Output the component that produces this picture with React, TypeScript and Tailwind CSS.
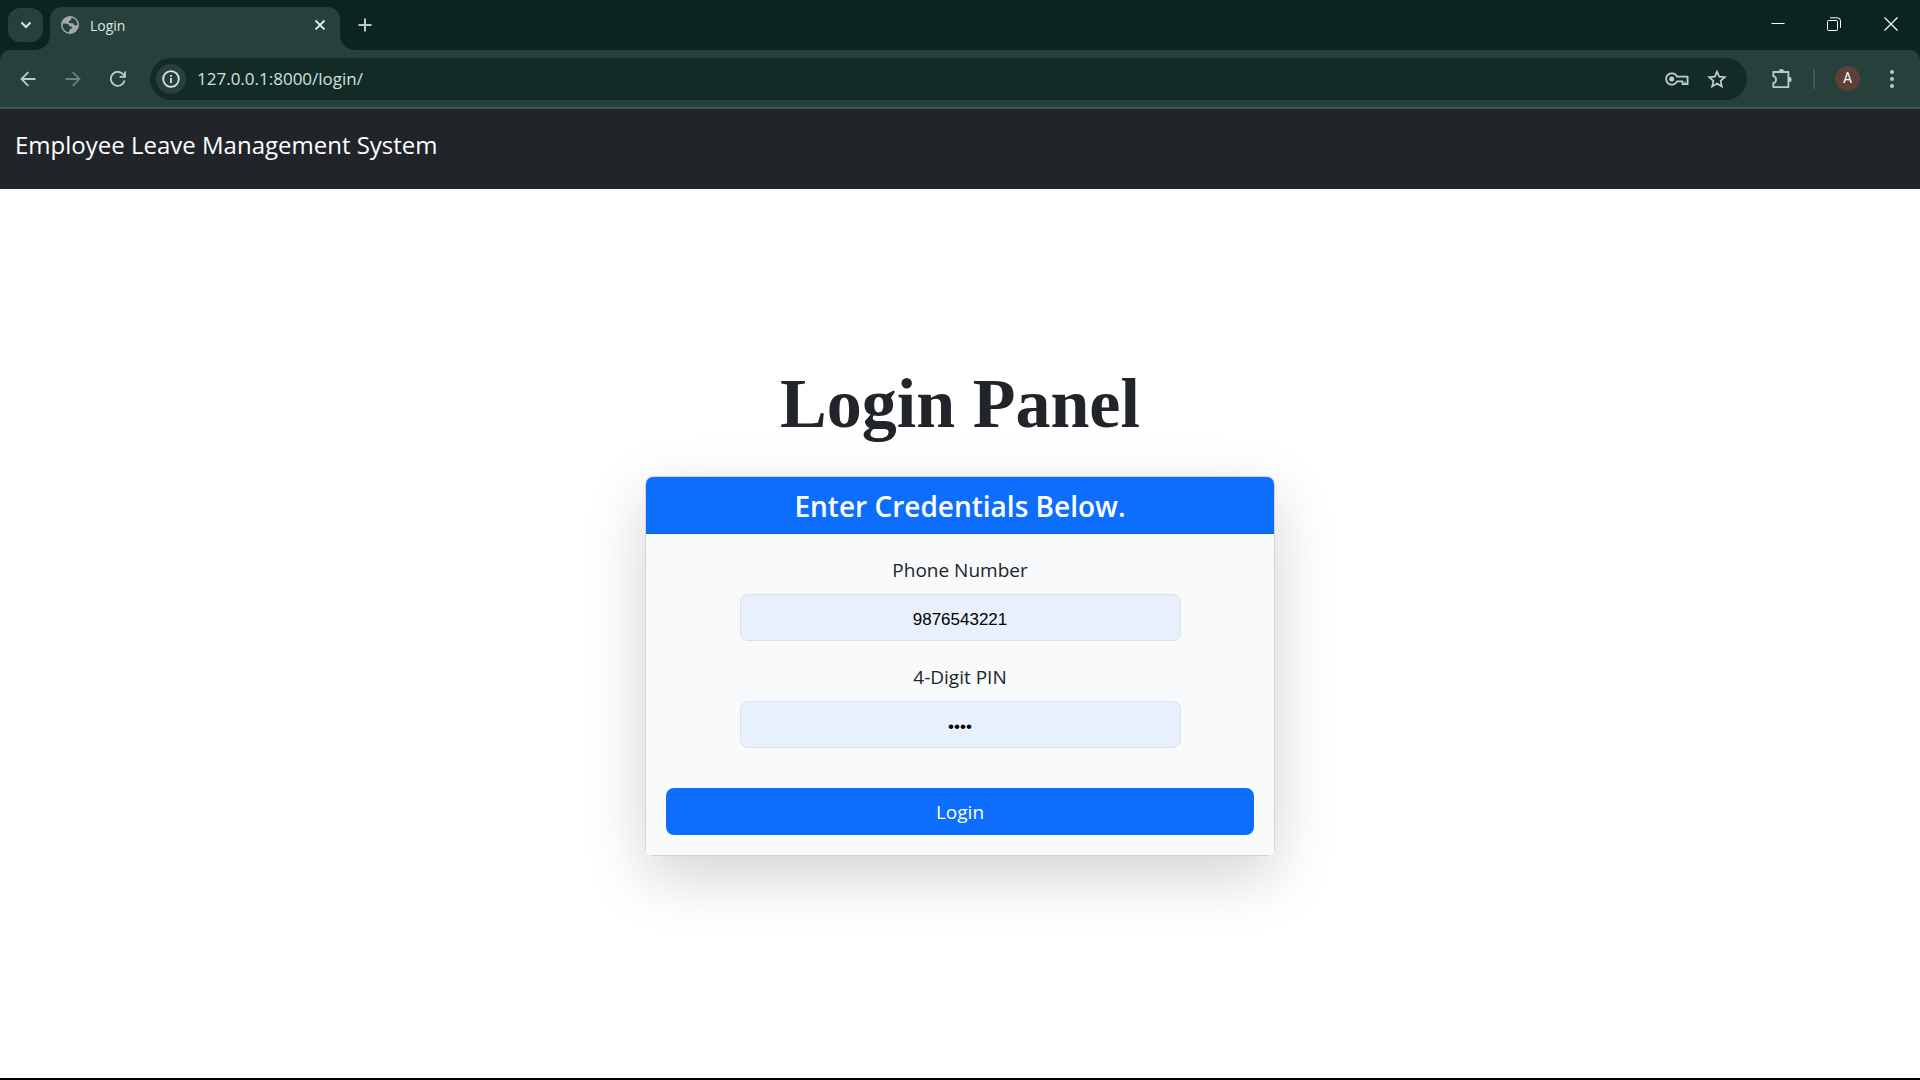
import React, { useState } from "react";

function CornerCurve({ side }: { side: "left" | "right" }) {
  return (
    <svg
      viewBox="0 0 15 15"
      aria-hidden="true"
      className={
        side === "left"
          ? "absolute bottom-0 right-full size-[15px] fill-[#28403b]"
          : "absolute bottom-0 left-full size-[15px] -scale-x-100 fill-[#28403b]"
      }
    >
      <path d="M15 0V15H0C8.3 15 15 8.3 15 0Z" />
    </svg>
  );
}

function GlobeIcon() {
  return (
    <svg viewBox="0 0 18 18" className="size-[18px]" aria-hidden="true">
      <circle cx="9" cy="9" r="9" fill="#a3a7b0" />
      <path
        d="M2 7.4 L6.4 7.8 L8.6 9.4 L8.6 10.6 L11 10.8 L11.2 12.4 L9.4 12.6 L8.6 14.2 L7.6 16.4 C4 15.6 1.6 12.6 1.6 9 Z"
        fill="#28403b"
      />
      <path
        d="M10.6 1.8 C14 2.6 16.4 5.4 16.4 9 L15 9.6 L13 9 L12.6 7.6 L10.4 7.2 L8 7 L7.8 5.2 L9.6 4.6 Z"
        fill="#28403b"
      />
    </svg>
  );
}

function TitleBar() {
  return (
    <div className="flex h-[50px] items-start bg-[#0a2420]">
      <button
        aria-label="Search tabs"
        className="ml-2 mt-2 flex h-[34px] w-[35px] items-center justify-center rounded-xl bg-[#28403b]"
      >
        <svg viewBox="0 0 12 12" className="size-3" fill="none" stroke="#dbe7e4" strokeWidth="2">
          <path d="M1.500 3.500 6 8l4.500-4.500" />
        </svg>
      </button>
      <div className="relative ml-[7px] mt-[7px] flex h-[43px] w-[290px] items-center rounded-t-xl bg-[#28403b] pb-[7px] pl-[11px] pr-3">
        <CornerCurve side="left" />
        <GlobeIcon />
        <span className="ml-[11px] flex-1 text-[14px] text-[#dbe7e4]">Login</span>
        <button aria-label="Close tab" className="flex size-4 items-center justify-center">
          <svg viewBox="0 0 12 12" className="size-3" fill="none" stroke="#e3ecea" strokeWidth="1.800">
            <path d="M1.500 1.500l9 9M10.500 1.500l-9 9" />
          </svg>
        </button>
        <CornerCurve side="right" />
      </div>
      <button aria-label="New tab" className="ml-[17px] mt-[17px] flex size-4 items-center justify-center">
        <svg viewBox="0 0 14 14" className="size-3.5" fill="none" stroke="#b4cfc9" strokeWidth="2">
          <path d="M7 .5v13M.5 7h13" />
        </svg>
      </button>
      <div className="ml-auto flex h-12 items-center">
        <button aria-label="Minimize" className="flex w-[56px] justify-center">
          <svg viewBox="0 0 14 14" className="size-3.5" fill="none" stroke="#fff">
            <path d="M.5 6.500h13" />
          </svg>
        </button>
        <button aria-label="Restore" className="flex w-[56px] justify-center">
          <svg viewBox="0 0 14 14" className="size-3.5" fill="none" stroke="#fff">
            <rect x=".5" y="3.500" width="10" height="10" rx="1" />
            <path d="M3 .8h7.500a3 3 0 0 1 3 3v7" />
          </svg>
        </button>
        <button aria-label="Close window" className="flex w-[58px] justify-center">
          <svg viewBox="0 0 14 14" className="size-3.5" fill="none" stroke="#fff" strokeWidth="1.200">
            <path d="M.5 .5l13 13M13.500 .5l-13 13" />
          </svg>
        </button>
      </div>
    </div>
  );
}

function Toolbar() {
  const [url, setUrl] = useState("127.0.0.1:8000/login/");
  return (
    <div className="bg-[#0a2420]">
      <div className="flex h-[59px] items-center rounded-t-[10px] border-b-2 border-[#43514e] bg-[#28403b]">
        <div className="flex w-[150px] items-center gap-[29px] pl-5">
          <button aria-label="Back">
            <svg viewBox="0 0 16 16" className="size-4" fill="none" stroke="#b4cfc9" strokeWidth="1.800">
              <path d="M15.500 8H2M8.300 1.200 1.500 8l6.800 6.800" />
            </svg>
          </button>
          <button aria-label="Forward" disabled>
            <svg viewBox="0 0 16 16" className="size-4" fill="none" stroke="#6b817c" strokeWidth="1.800">
              <path d="M.5 8H14M7.700 1.200 14.500 8l-6.800 6.800" />
            </svg>
          </button>
          <button aria-label="Reload">
            <svg viewBox="0 0 16 16" className="size-4" fill="none" stroke="#b4cfc9" strokeWidth="1.800">
              <path d="M14.600 9.600A7 7 0 1 1 13.400 3.600L14.800 5.300" />
              <path d="M15 .5v5.400H9.600" />
            </svg>
          </button>
        </div>
        <div className="flex h-[42px] flex-1 items-center rounded-full bg-[#122b27] pl-1.5 pr-5">
          <button
            aria-label="Site information"
            className="flex size-[30px] items-center justify-center rounded-full bg-[#28403b]"
          >
            <svg viewBox="0 0 18 18" className="size-[18px]" fill="none" stroke="#dbe5e2" strokeWidth="1.800">
              <circle cx="9" cy="9" r="7.800" />
              <path d="M9 8v5M9 5v1.800" />
            </svg>
          </button>
          <input
            aria-label="Address"
            value={url}
            onChange={(e) => setUrl(e.target.value)}
            className="ml-[11px] flex-1 bg-transparent text-[17px] text-[#d3e0dd] outline-none"
          />
          <button aria-label="Saved passwords">
            <svg viewBox="0 0 24 14" className="h-3.5 w-6" fill="none" stroke="#c2cfcc" strokeWidth="1.800">
              <path d="M12 4.700H22.600V12.200H17.600V9.300H12A5.700 5.700 0 1 1 12 4.700Z" strokeLinejoin="round" />
              <path d="M20.200 9.500v2.500" strokeWidth="1.200" />
              <circle cx="6.700" cy="7" r="2.500" fill="#c2cfcc" stroke="none" />
            </svg>
          </button>
          <button aria-label="Bookmark this page" className="ml-[18px]">
            <svg viewBox="0 0 20 20" className="size-5" fill="none" stroke="#c2cfcc" strokeWidth="1.700">
              <path d="M10 2.600l2.200 5.100 5.600.5-4.200 3.700 1.200 5.500L10 14.500l-4.800 2.900 1.200-5.500L2.200 8.200l5.600-.5Z" />
            </svg>
          </button>
        </div>
        <div className="flex w-[173px] items-center pl-6">
          <button aria-label="Extensions">
            <svg viewBox="0 0 22 22" className="size-[22px]" fill="none" stroke="#b4cfc9" strokeWidth="1.800">
              <path
                d="M3.500 4H17.400V19.200H2.300V15C6 14.300 6 9 2.300 8.200V4Z"
                strokeLinejoin="round"
              />
              <path d="M7.800 3.500a2.600 2.600 0 0 1 5.200 0ZM18 8.800a2.600 2.600 0 0 1 0 5.200Z" fill="#b4cfc9" stroke="none" />
            </svg>
          </button>
          <div className="ml-5 h-5 w-0.5 bg-[#3d5a54]" />
          <button
            aria-label="Profile"
            className="ml-5 flex size-[25px] items-center justify-center rounded-full bg-[#5d4037] font-['Roboto',sans-serif] text-[14px] text-white"
          >
            A
          </button>
          <button aria-label="Browser menu" className="ml-[23px]">
            <svg viewBox="0 0 18 18" className="size-[18px]" fill="#b4cfc9">
              <circle cx="9" cy="2" r="2" />
              <circle cx="9" cy="9" r="2" />
              <circle cx="9" cy="16" r="2" />
            </svg>
          </button>
        </div>
      </div>
    </div>
  );
}

function Field({ id, label, type, initial }: { id: string; label: string; type: string; initial: string }) {
  const [value, setValue] = useState(initial);
  return (
    <div className="mb-5 flex flex-col items-center">
      <label htmlFor={id} className="mb-2 text-[19px] leading-8 text-[#212529]">
        {label}
      </label>
      <input
        id={id}
        type={type}
        value={value}
        onChange={(e) => setValue(e.target.value)}
        className="h-[47px] w-3/4 rounded-lg border border-[#dee2e6] bg-[#e8f0fe] px-4 pt-1 text-center font-['Liberation_Sans',Arial,sans-serif] text-[17px] text-black"
      />
    </div>
  );
}

export default function App() {
  return (
    <div className="flex min-h-screen flex-col border-b-2 border-black bg-white font-['Open_Sans','Segoe_UI',sans-serif]">
      <header>
        <TitleBar />
        <Toolbar />
      </header>
      <nav className="h-20 bg-[#212529] px-[15px] pt-[18px]">
        <a href="#" className="text-[24px] leading-[36px] text-white">
          Employee Leave Management System
        </a>
      </nav>
      <main className="flex flex-1 flex-col items-center px-4 pt-[173px]">
        <h1 className="mb-[30px] font-['Liberation_Serif','Times_New_Roman',serif] text-[70px] font-bold leading-[84px] text-[#212529]">
          Login Panel
        </h1>
        <form
          onSubmit={(e) => e.preventDefault()}
          className="w-full max-w-[630px] rounded-lg border border-black/17 shadow-[0_20px_60px_rgba(0,0,0,0.175)]"
        >
          <h2 className="rounded-t-[7px] border-b border-[#0b5bd1] bg-[#0d6efd] pb-2 pt-2.5 text-center text-[28px] font-semibold leading-[38px] text-white">
            Enter Credentials Below.
          </h2>
          <div className="bg-[#f8fafc] p-5">
            <Field id="phone" label="Phone Number" type="text" initial="9876543221" />
            <Field id="pin" label="4-Digit PIN" type="password" initial="1234" />
            <button type="submit" className="mt-5 h-[47px] w-full rounded-lg bg-[#0d6efd] pt-0.5 text-[19px] text-white">
              Login
            </button>
          </div>
        </form>
      </main>
    </div>
  );
}
